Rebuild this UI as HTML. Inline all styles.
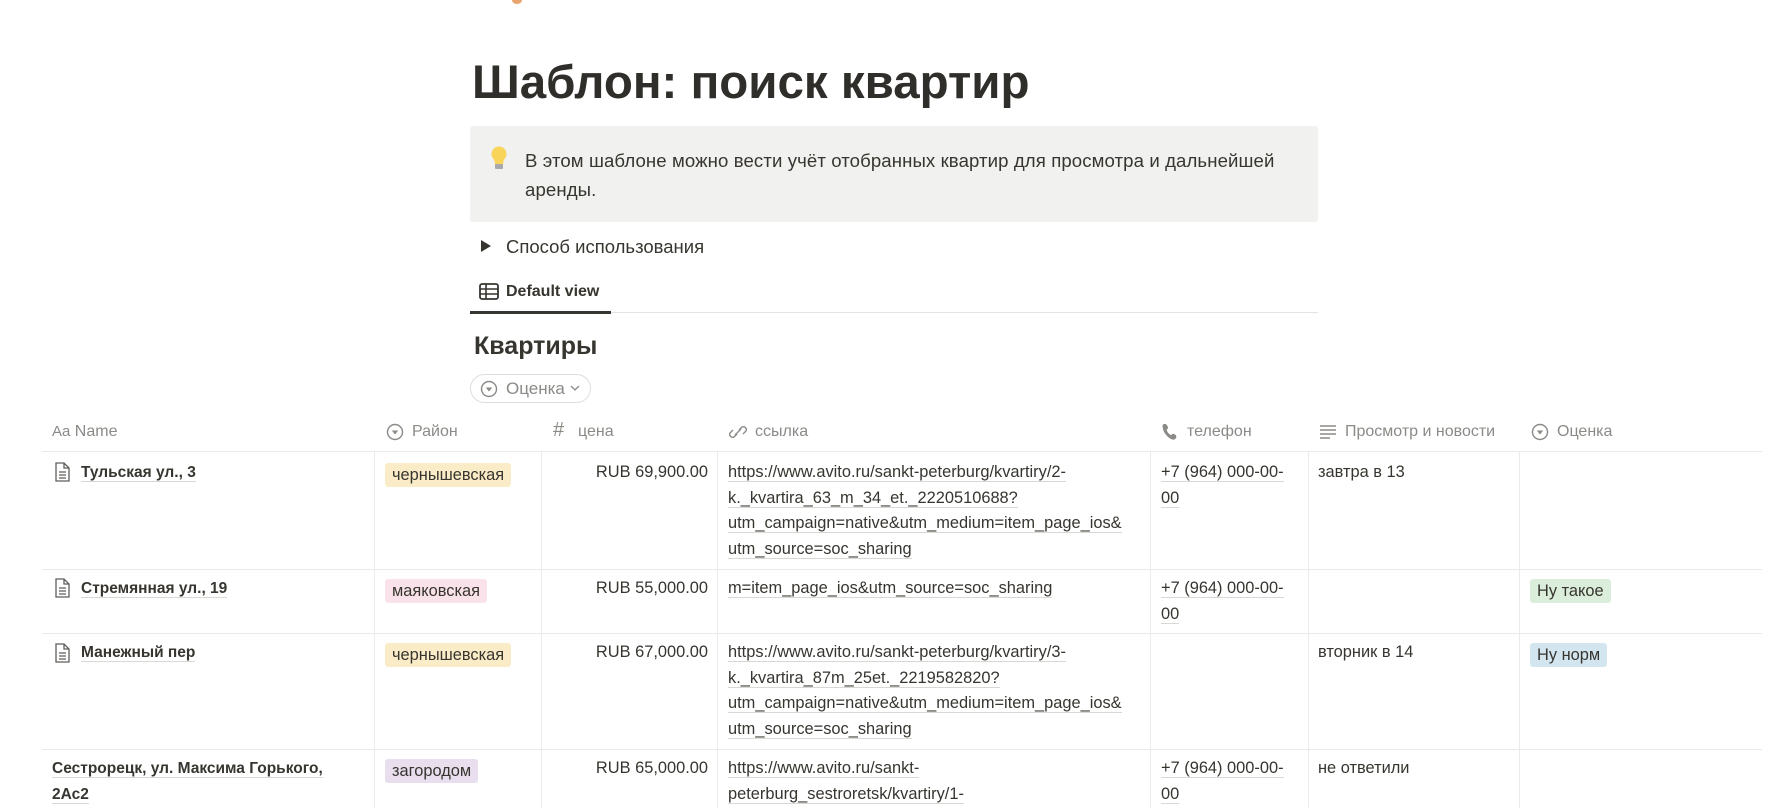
<!DOCTYPE html>
<html><head><meta charset="utf-8">
<style>
*{margin:0;padding:0;box-sizing:border-box}
body{width:1774px;height:808px;overflow:hidden;background:#fff;font-family:"Liberation Sans","Noto Sans CJK SC",sans-serif;color:#37352f;position:relative}
.a{position:absolute;white-space:nowrap}
.t{font-size:16.4px;line-height:25.5px}
.u{border-bottom:1px solid #d9d8d5}
.h{color:#8b8a86;font-size:16px;line-height:20px}
.tag{position:absolute;font-size:16.4px;line-height:24px;padding:0 7px;border-radius:3px}
.vl{position:absolute;width:1px;background:#ebebea}
.hl{position:absolute;height:1px;background:#e9e9e7;left:42px;width:1720px}
.nm{font-weight:bold;font-size:15.5px}
</style></head><body>
<div class="a" style="left:512px;top:-4px;width:10px;height:8px;background:#e8a46c;border-radius:50%"></div>
<div class="a" style="left:472px;top:52px;font-size:47.5px;font-weight:bold;line-height:62px;color:#2f2e2a">Шаблон: поиск квартир</div>
<div class="a" style="left:470px;top:126px;width:848px;height:96px;background:#f1f1ef;border-radius:3px"></div>
<svg class="a" style="left:488px;top:145px" width="22" height="28" viewBox="0 0 22 28"><circle cx="11" cy="9" r="7.5" fill="#f9d45a"/><path d="M6 13h10l-1 7H7z" fill="#f9d45a"/><rect x="7" y="19" width="8" height="5" rx="1" fill="#a7a9ac"/></svg>
<div class="a" style="left:525px;top:146px;font-size:18.6px;letter-spacing:0.1px;line-height:29px">В этом шаблоне можно вести учёт отобранных квартир для просмотра и дальнейшей<br>аренды.</div>
<div class="a" style="left:481px;top:240px;width:0;height:0;border-left:10px solid #37352f;border-top:6px solid transparent;border-bottom:6px solid transparent"></div>
<div class="a" style="left:506px;top:235px;font-size:18.5px;line-height:24px">Способ использования</div>
<svg class="a" style="left:479px;top:283px" width="20" height="17" viewBox="0 0 20 17"><rect x="1" y="1" width="18" height="15" rx="2" fill="none" stroke="#37352f" stroke-width="1.8"/><path d="M1 6h18M1 11h18M7 1v15" stroke="#37352f" stroke-width="1.6"/></svg>
<div class="a" style="left:506px;top:281px;font-size:16px;font-weight:bold;line-height:22px">Default view</div>
<div class="a" style="left:470px;top:312px;width:848px;height:1px;background:#e3e3e1"></div>
<div class="a" style="left:470px;top:311px;width:141px;height:3px;background:#37352f"></div>
<div class="a" style="left:474px;top:330px;font-size:25px;font-weight:bold;line-height:32px">Квартиры</div>
<div class="a" style="left:470px;top:374px;width:121px;height:29px;border:1px solid #dedede;border-radius:15px"></div>
<svg class="a" style="left:480px;top:380px" width="18" height="18" viewBox="0 0 18 18"><circle cx="9" cy="9" r="7.5" fill="none" stroke="#8b8a86" stroke-width="1.4"/><path d="M5.8 7.5h6.4L9 11.5z" fill="#8b8a86"/></svg>
<div class="a h" style="left:506px;top:379px;font-size:17px">Оценка</div>
<svg class="a" style="left:570px;top:384px" width="10" height="8" viewBox="0 0 10 8"><path d="M1 2l4 4 4-4" fill="none" stroke="#8b8a86" stroke-width="1.3"/></svg>

<div class="a h" style="left:52px;top:422px"><span style="font-size:15px">Aa</span> Name</div>
<svg class="a" style="left:386px;top:423px" width="18" height="18" viewBox="0 0 18 18"><circle cx="9" cy="9" r="7.5" fill="none" stroke="#8b8a86" stroke-width="1.4"/><path d="M5.8 7.5h6.4L9 11.5z" fill="#8b8a86"/></svg>
<div class="a h" style="left:412px;top:422px">Район</div>
<div class="a h" style="left:553px;top:420px;font-size:20px">#</div>
<div class="a h" style="left:578px;top:422px">цена</div>
<svg class="a" style="left:729px;top:422px" width="18" height="20" viewBox="0 0 18 20"><path d="M8 12l-3 3a3 3 0 01-4-4l3-3M10 8l3-3a3 3 0 014 4l-3 3M6 13l6-6" fill="none" stroke="#8b8a86" stroke-width="1.4"/></svg>
<div class="a h" style="left:755px;top:422px">ссылка</div>
<svg class="a" style="left:1162px;top:423px" width="16" height="18" viewBox="0 0 16 18"><path d="M3 1c2 0 3 3 3 4s-2 1-1 3 3 4 4 4 1-2 3-1 3 2 2 4-3 2-5 1S2 11 1 6 1 1 3 1z" fill="#8b8a86"/></svg>
<div class="a h" style="left:1187px;top:422px">телефон</div>
<svg class="a" style="left:1319px;top:424px" width="18" height="16" viewBox="0 0 18 16"><path d="M1 2h16M1 6h16M1 10h16M1 14h10" stroke="#8b8a86" stroke-width="1.4"/></svg>
<div class="a h" style="left:1345px;top:422px">Просмотр и новости</div>
<svg class="a" style="left:1531px;top:423px" width="18" height="18" viewBox="0 0 18 18"><circle cx="9" cy="9" r="7.5" fill="none" stroke="#8b8a86" stroke-width="1.4"/><path d="M5.8 7.5h6.4L9 11.5z" fill="#8b8a86"/></svg>
<div class="a h" style="left:1557px;top:422px">Оценка</div>

<div class="hl" style="top:451px"></div>
<div class="hl" style="top:569px"></div>
<div class="hl" style="top:633px"></div>
<div class="hl" style="top:749px"></div>
<div class="vl" style="left:374px;top:452px;height:356px"></div>
<div class="vl" style="left:541px;top:452px;height:356px"></div>
<div class="vl" style="left:717px;top:452px;height:356px"></div>
<div class="vl" style="left:1150px;top:452px;height:356px"></div>
<div class="vl" style="left:1308px;top:452px;height:356px"></div>
<div class="vl" style="left:1519px;top:452px;height:356px"></div>

<svg class="a" style="left:54px;top:462px" width="16" height="20" viewBox="0 0 16 20"><path d="M2 1h8l5 5v13H2z M10 1v5h5 M5 10h7M5 13h7M5 16h7" fill="none" stroke="#5f5e5b" stroke-width="1.3"/></svg>
<svg class="a" style="left:54px;top:578px" width="16" height="20" viewBox="0 0 16 20"><path d="M2 1h8l5 5v13H2z M10 1v5h5 M5 10h7M5 13h7M5 16h7" fill="none" stroke="#5f5e5b" stroke-width="1.3"/></svg>
<svg class="a" style="left:54px;top:643px" width="16" height="20" viewBox="0 0 16 20"><path d="M2 1h8l5 5v13H2z M10 1v5h5 M5 10h7M5 13h7M5 16h7" fill="none" stroke="#5f5e5b" stroke-width="1.3"/></svg>

<div class="a t nm" style="left:81px;top:460px"><span class="u">Тульская ул., 3</span></div>
<div class="tag" style="left:385px;top:463px;background:#fbecc8">чернышевская</div>
<div class="a t" style="left:541px;width:167px;text-align:right;top:460px">RUB 69,900.00</div>
<div class="a t" style="left:728px;top:460px"><span class="u">https://www.avito.ru/sankt-peterburg/kvartiry/2-</span><br><span class="u">k._kvartira_63_m_34_et._2220510688?</span><br><span class="u">utm_campaign=native&amp;utm_medium=item_page_ios&amp;</span><br><span class="u">utm_source=soc_sharing</span></div>
<div class="a t" style="left:1161px;top:460px"><span class="u">+7 (964) 000-00-</span><br><span class="u">00</span></div>
<div class="a t" style="left:1318px;top:460px">завтра в 13</div>

<div class="a t nm" style="left:81px;top:576px"><span class="u">Стремянная ул., 19</span></div>
<div class="tag" style="left:385px;top:579px;background:#f9e2ea">маяковская</div>
<div class="a t" style="left:541px;width:167px;text-align:right;top:576px">RUB 55,000.00</div>
<div class="a t" style="left:728px;top:576px"><span class="u">m=item_page_ios&amp;utm_source=soc_sharing</span></div>
<div class="a t" style="left:1161px;top:576px"><span class="u">+7 (964) 000-00-</span><br><span class="u">00</span></div>
<div class="tag" style="left:1530px;top:579px;background:#dbeddb">Ну такое</div>

<div class="a t nm" style="left:81px;top:640px"><span class="u">Манежный пер</span></div>
<div class="tag" style="left:385px;top:643px;background:#fbecc8">чернышевская</div>
<div class="a t" style="left:541px;width:167px;text-align:right;top:640px">RUB 67,000.00</div>
<div class="a t" style="left:728px;top:640px"><span class="u">https://www.avito.ru/sankt-peterburg/kvartiry/3-</span><br><span class="u">k._kvartira_87m_25et._2219582820?</span><br><span class="u">utm_campaign=native&amp;utm_medium=item_page_ios&amp;</span><br><span class="u">utm_source=soc_sharing</span></div>
<div class="a t" style="left:1318px;top:640px">вторник в 14</div>
<div class="tag" style="left:1530px;top:643px;background:#d3e5ef">Ну норм</div>

<div class="a t nm" style="left:52px;top:756px"><span class="u">Сестрорецк, ул. Максима Горького,</span><br><span class="u">2Ас2</span></div>
<div class="tag" style="left:385px;top:759px;background:#e8deee">загородом</div>
<div class="a t" style="left:541px;width:167px;text-align:right;top:756px">RUB 65,000.00</div>
<div class="a t" style="left:728px;top:756px"><span class="u">https://www.avito.ru/sankt-</span><br><span class="u">peterburg_sestroretsk/kvartiry/1-</span></div>
<div class="a t" style="left:1161px;top:756px"><span class="u">+7 (964) 000-00-</span><br><span class="u">00</span></div>
<div class="a t" style="left:1318px;top:756px">не ответили</div>
</body></html>
